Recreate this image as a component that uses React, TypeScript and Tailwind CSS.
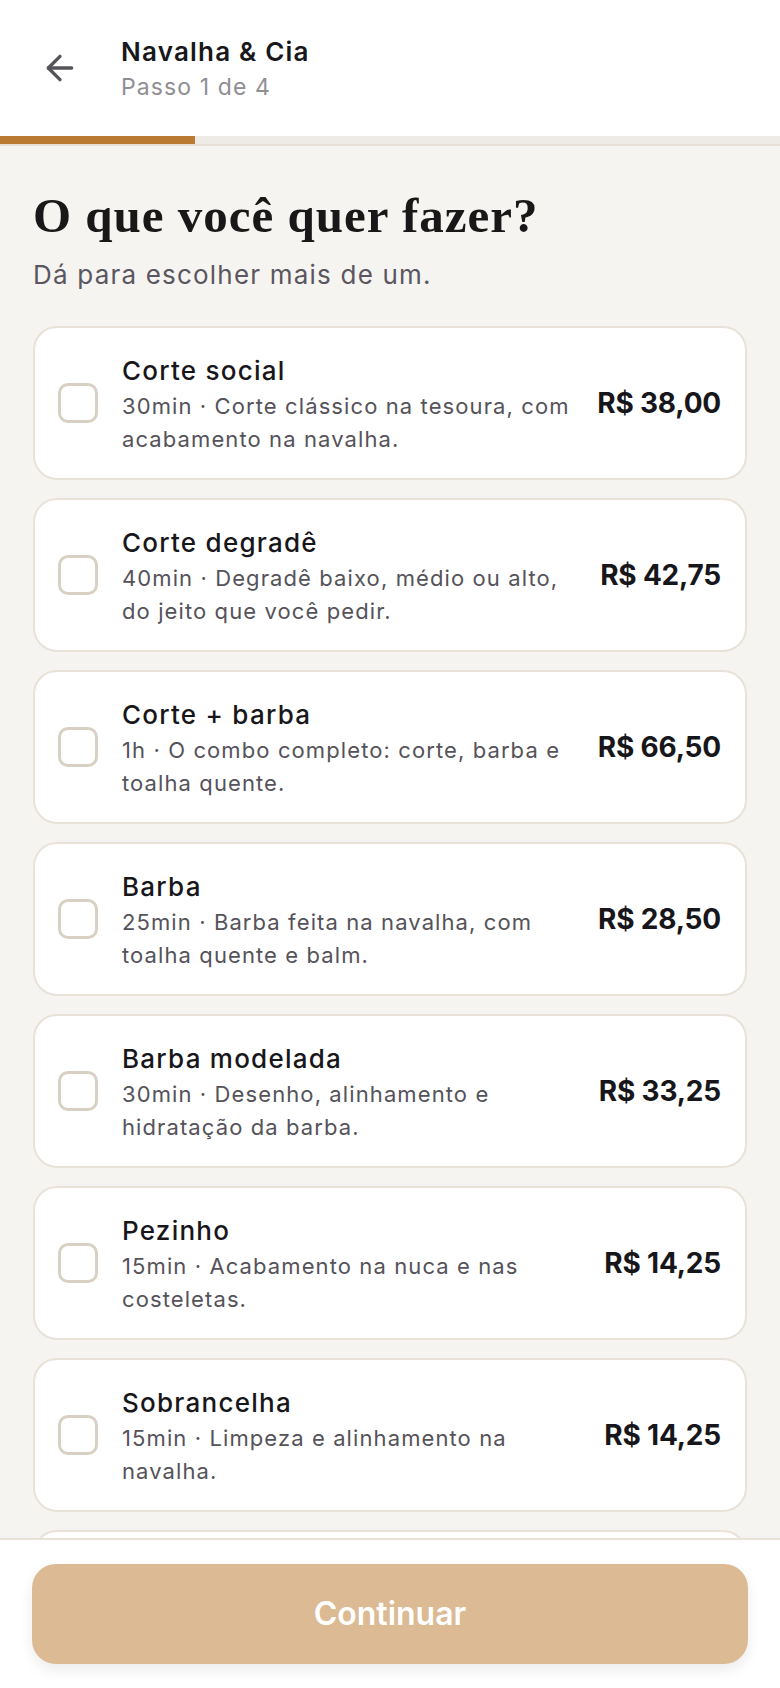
import { ArrowLeft } from 'lucide-react';

const services = [
  { name: 'Corte social', time: '30min', desc: 'Corte clássico na tesoura, com acabamento na navalha.', price: 'R$ 38,00' },
  { name: 'Corte degradê', time: '40min', desc: 'Degradê baixo, médio ou alto, do jeito que você pedir.', price: 'R$ 42,75' },
  { name: 'Corte + barba', time: '1h', desc: 'O combo completo: corte, barba e toalha quente.', price: 'R$ 66,50' },
  { name: 'Barba', time: '25min', desc: 'Barba feita na navalha, com toalha quente e balm.', price: 'R$ 28,50' },
  { name: 'Barba modelada', time: '30min', desc: 'Desenho, alinhamento e hidratação da barba.', price: 'R$ 33,25' },
  { name: 'Pezinho', time: '15min', desc: 'Acabamento na nuca e nas costeletas.', price: 'R$ 14,25' },
  { name: 'Sobrancelha', time: '15min', desc: 'Limpeza e alinhamento na navalha.', price: 'R$ 14,25' },
  { name: 'Hidratação', time: '20min', desc: 'Hidratação capilar com toalha quente.', price: 'R$ 24,00' },
];

export default function App() {
  return (
    <div className="h-[1688px] w-[780px] flex flex-col overflow-hidden bg-[#f6f4f0] font-['Inter','Noto_Sans',sans-serif]">
      {/* Header */}
      <header className="bg-white">
        <div className="h-[136px] flex items-center">
          <button className="ml-[40px] w-[40px] h-[40px] flex items-center justify-center text-[#56545b]">
            <ArrowLeft size={40} strokeWidth={2} />
          </button>
          <div className="ml-[41px] flex flex-col gap-[2px]">
            <div className="text-[26px] leading-[36px] font-semibold tracking-[1.2px] text-[#18171b]">Navalha &amp; Cia</div>
            <div className="text-[23px] leading-[30px] tracking-[1.1px] text-[#8f8e94]">Passo 1 de 4</div>
          </div>
        </div>
        <div className="h-[8px] bg-[#eeebe6]">
          <div className="h-full w-1/4 bg-[#bb7a32]" />
        </div>
        <div className="h-[2px] bg-[#e7e0d6]" />
      </header>

      {/* Content */}
      <main className="flex-1 overflow-hidden px-[33px] pt-[41px]">
        <h1 className="font-['Liberation_Serif',serif] font-bold text-[49px] leading-[58px] tracking-[1px] text-[#1a1718]">
          O que você quer fazer?
        </h1>
        <p className="mt-[14px] text-[26px] leading-[32px] tracking-[1.2px] text-[#5a5660]">Dá para escolher mais de um.</p>

        <div className="mt-[35px] flex flex-col gap-[18px]">
          {services.map((s) => (
            <label
              key={s.name}
              className="h-[154px] shrink-0 flex items-center bg-white border-2 border-[#e8e2d9] rounded-[24px] pl-[23px] pr-[24px]"
            >
              <span className="w-[40px] h-[40px] shrink-0 rounded-[10px] border-[3px] border-[#d9d0c4] bg-white" />
              <div className="flex-1 ml-[24px] mr-[20px]">
                <div className="text-[26px] leading-[39px] font-medium tracking-[1.25px] text-[#17161a]">{s.name}</div>
                <div className="text-[22px] leading-[33px] tracking-[1.1px] text-[#55525a]">
                  {s.time} · {s.desc}
                </div>
              </div>
              <div className="shrink-0 text-[28px] font-bold tracking-[-0.2px] text-[#17161a]">{s.price}</div>
            </label>
          ))}
        </div>
      </main>

      {/* Footer */}
      <footer className="bg-white border-t-2 border-[#e8e2d9] px-8 pt-[24px] pb-[24px]">
        <button className="w-full h-[100px] rounded-[24px] bg-[#dbba94] text-white text-[32px] font-semibold shadow-[0_6px_14px_rgba(0,0,0,0.08)]">
          Continuar
        </button>
      </footer>
    </div>
  );
}
